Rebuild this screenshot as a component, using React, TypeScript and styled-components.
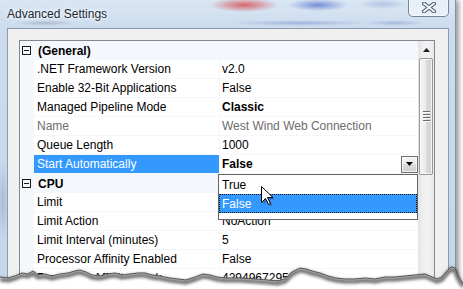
import styled, { createGlobalStyle } from "styled-components";

const GlobalStyle = createGlobalStyle`
  html, body {
    margin: 0;
    padding: 0;
    background: #fff;
    overflow: hidden;
  }
  body {
    font-family: "Liberation Sans", Arial, sans-serif;
  }
`;

type Prop = {
  name: string;
  value: string;
  bold?: boolean;
  disabled?: boolean;
  selected?: boolean;
  dropdown?: boolean;
};

type Category = { title: string; items: Prop[] };

const categories: Category[] = [
  {
    title: "(General)",
    items: [
      { name: ".NET Framework Version", value: "v2.0" },
      { name: "Enable 32-Bit Applications", value: "False" },
      { name: "Managed Pipeline Mode", value: "Classic", bold: true },
      { name: "Name", value: "West Wind Web Connection", disabled: true },
      { name: "Queue Length", value: "1000" },
      { name: "Start Automatically", value: "False", bold: true, selected: true, dropdown: true },
    ],
  },
  {
    title: "CPU",
    items: [
      { name: "Limit", value: "" },
      { name: "Limit Action", value: "NoAction" },
      { name: "Limit Interval (minutes)", value: "5" },
      { name: "Processor Affinity Enabled", value: "False" },
      { name: "Processor Affinity Mask", value: "4294967295" },
    ],
  },
];

const options = ["True", "False"];

// torn paper edge, y values relative to the svg top (page y 259)
const edge: [number, number][] = [
  [0, 277], [8, 278], [15, 276], [22, 273], [28, 274], [33, 271], [38, 275], [45, 274],
  [52, 276], [60, 274], [68, 273], [75, 271], [80, 270], [86, 272], [92, 275], [100, 276],
  [108, 274], [115, 273], [122, 275], [130, 274], [138, 273], [145, 273], [152, 275],
  [160, 276], [170, 278], [178, 279], [186, 280], [195, 277], [203, 274], [210, 275],
  [217, 277], [225, 278], [240, 278], [255, 279], [268, 280], [278, 281], [285, 279],
  [292, 272], [300, 268], [306, 269], [312, 271], [320, 273], [328, 276], [336, 278],
  [345, 279], [355, 279], [365, 278], [375, 279], [385, 277], [395, 277], [405, 276],
  [415, 275], [425, 274], [432, 277], [437, 279], [442, 277], [447, 271], [451, 267],
  [455, 268], [458, 276], [463, 284],
];

const edgeLine = edge.map(([x, y]) => `${x},${y - 259}`).join(" ");

export default function App() {
  return (
    <>
      <GlobalStyle />
      <Page>
        <Window>
          <TitleBar>
            <Title>Advanced Settings</Title>
            <CloseButton>
              <svg width="14" height="11" viewBox="0 0 14 11">
                <path d="M2 1.5 L12 9.5 M12 1.5 L2 9.5" stroke="#4c5a6a" strokeWidth="4" strokeLinecap="round" />
                <path d="M2 1.5 L12 9.5 M12 1.5 L2 9.5" stroke="#f4f7fa" strokeWidth="2" strokeLinecap="round" />
              </svg>
            </CloseButton>
          </TitleBar>
          <Client>
            <Grid>
              <Rows>
                {categories.map((cat) => (
                  <div key={cat.title}>
                    <CategoryRow>
                      <Toggle />
                      <CategoryLabel>{cat.title}</CategoryLabel>
                    </CategoryRow>
                    {cat.items.map((p) => (
                      <Row key={p.name}>
                        <Gutter />
                        <NameCell $selected={p.selected} $disabled={p.disabled}>
                          {p.name}
                        </NameCell>
                        <ValueCell $bold={p.bold} $disabled={p.disabled}>
                          <span>{p.value}</span>
                          {p.dropdown && (
                            <DropButton>
                              <svg width="7" height="4" viewBox="0 0 7 4">
                                <path d="M0 0 H7 L3.5 4 Z" fill="#000" />
                              </svg>
                            </DropButton>
                          )}
                        </ValueCell>
                      </Row>
                    ))}
                  </div>
                ))}
              </Rows>
              <ScrollBar>
                <ScrollArrow>
                  <svg width="7" height="4" viewBox="0 0 7 4">
                    <path d="M0 4 H7 L3.5 0 Z" fill="#1f1f1f" />
                  </svg>
                </ScrollArrow>
                <Thumb>
                  <Grip>
                    <i />
                    <i />
                    <i />
                    <i />
                  </Grip>
                </Thumb>
                <Track />
              </ScrollBar>
              <DropList>
                {options.map((o) => (
                  <Option key={o} $active={o === "False"}>
                    {o}
                  </Option>
                ))}
              </DropList>
              <Cursor width="13" height="20" viewBox="0 0 13 20">
                <path
                  d="M1.5 1.5 L1.5 17.5 L5.5 13.5 L8.5 19.5 L10.5 18.5 L7.5 12.5 L13 12.5 Z"
                  fill="rgba(0,0,0,0.25)"
                  transform="translate(1 1)"
                />
                <path
                  d="M0.5 0.5 L0.5 16.5 L4.5 12.5 L7.5 18.5 L9.5 17.5 L6.5 11.5 L12 11.5 Z"
                  fill="#fff"
                  stroke="#000"
                  strokeWidth="1"
                  strokeLinejoin="round"
                />
              </Cursor>
            </Grid>
          </Client>
        </Window>
        <TornEdge width="463" height="30" viewBox="0 0 463 30">
          <defs>
            <filter id="blur" x="-5%" y="-50%" width="110%" height="200%">
              <feGaussianBlur stdDeviation="1.6" />
            </filter>
          </defs>
          <polygon points={`${edgeLine} 463,30 0,30`} fill="#fff" />
          <polyline
            points={edgeLine}
            fill="none"
            stroke="#3a3a3a"
            strokeWidth="4"
            opacity="0.75"
            filter="url(#blur)"
            transform="translate(0 2.5)"
          />
          <polyline points={edgeLine} fill="none" stroke="#555" strokeWidth="1" />
        </TornEdge>
      </Page>
    </>
  );
}

const Page = styled.div`
  position: relative;
  width: 463px;
  height: 289px;
  overflow: hidden;
  background: #fff;
`;

const Window = styled.div`
  width: 456px;
  height: 320px;
  box-sizing: border-box;
  padding: 0 6px 0 7px;
  display: flex;
  flex-direction: column;
  border-right: 1px solid #8193a8;
  box-shadow: 3px 0 5px rgba(0, 0, 0, 0.4);
  background:
    radial-gradient(ellipse 34px 7px at 244px 5px, rgba(214, 58, 58, 0.75), transparent),
    radial-gradient(ellipse 30px 6px at 318px 5px, rgba(52, 84, 196, 0.6), transparent),
    radial-gradient(ellipse 24px 5px at 382px 4px, rgba(120, 150, 200, 0.4), transparent),
    radial-gradient(ellipse 70px 3px at 300px 23px, rgba(70, 100, 180, 0.35), transparent),
    radial-gradient(ellipse 30px 3px at 395px 23px, rgba(70, 100, 180, 0.3), transparent),
    radial-gradient(ellipse 30px 3px at 45px 23px, rgba(90, 100, 120, 0.3), transparent),
    radial-gradient(ellipse 6px 40px at 3px 200px, rgba(80, 100, 140, 0.25), transparent),
    linear-gradient(to bottom, #d9e6f4, #ccdcee 28px, #c4d6eb);
`;

const TitleBar = styled.div`
  height: 28px;
  display: flex;
  justify-content: space-between;
  align-items: flex-start;
`;

const Title = styled.div`
  margin-top: 6px;
  font-size: 12px;
  line-height: 16px;
  color: #1c2733;
  text-shadow: 0 0 6px #fff, 0 0 3px #fff;
`;

const CloseButton = styled.div`
  width: 41px;
  height: 18px;
  box-sizing: border-box;
  margin-top: -1px;
  border: 1px solid rgba(70, 88, 110, 0.7);
  border-top: none;
  border-radius: 0 0 5px 5px;
  background: linear-gradient(to bottom, rgba(255, 255, 255, 0.35), rgba(255, 255, 255, 0.55));
  box-shadow: inset 0 0 0 1px rgba(255, 255, 255, 0.5);
  display: flex;
  align-items: center;
  justify-content: center;
`;

const Client = styled.div`
  flex: 1;
  box-sizing: border-box;
  border: 1px solid #8a9bb0;
  background: #f0f0f0;
  padding: 11px 13px 0 11px;
  display: flex;
  flex-direction: column;
`;

const Grid = styled.div`
  position: relative;
  flex: 1;
  display: flex;
  border: 1px solid #828790;
  background: #fff;
  font-size: 12px;
  color: #000;
`;

const Rows = styled.div`
  width: 398px;
  display: flex;
  flex-direction: column;
`;

const CategoryRow = styled.div`
  height: 19px;
  display: flex;
  align-items: center;
  background: #f4f7fc;
`;

const Toggle = styled.div`
  position: relative;
  width: 9px;
  height: 9px;
  box-sizing: border-box;
  margin-left: 2px;
  border: 1px solid #1a1a1a;
  &::after {
    content: "";
    position: absolute;
    left: 1px;
    right: 1px;
    top: 3px;
    height: 1px;
    background: #1a1a1a;
  }
`;

const CategoryLabel = styled.span`
  margin-left: 7px;
  font-weight: bold;
`;

const Row = styled.div`
  height: 19px;
  box-sizing: border-box;
  display: flex;
  border-bottom: 1px solid #f4f7fc;
`;

const Gutter = styled.div`
  width: 14px;
  background: #f4f7fc;
`;

const NameCell = styled.div<{ $selected?: boolean; $disabled?: boolean }>`
  width: 186px;
  box-sizing: border-box;
  padding-left: 3px;
  display: flex;
  align-items: center;
  white-space: nowrap;
  border-right: 1px solid #f4f7fc;
  background: ${(p) => (p.$selected ? "#3399ff" : "transparent")};
  color: ${(p) => (p.$selected ? "#fff" : p.$disabled ? "#6d6d6d" : "#000")};
`;

const ValueCell = styled.div<{ $bold?: boolean; $disabled?: boolean }>`
  flex: 1;
  padding-left: 2px;
  display: flex;
  align-items: center;
  justify-content: space-between;
  white-space: nowrap;
  font-weight: ${(p) => (p.$bold ? "bold" : "normal")};
  color: ${(p) => (p.$disabled ? "#6d6d6d" : "#000")};
`;

const DropButton = styled.div`
  width: 17px;
  height: 17px;
  box-sizing: border-box;
  margin-right: 0;
  border: 1px solid #707070;
  background: linear-gradient(to bottom, #f2f2f2, #ebebeb 50%, #dddddd 50%, #cfcfcf);
  box-shadow: inset 0 0 0 1px rgba(255, 255, 255, 0.7);
  display: flex;
  align-items: center;
  justify-content: center;
`;

const ScrollBar = styled.div`
  width: 16px;
  display: flex;
  flex-direction: column;
  background: linear-gradient(to right, #e4e4e4, #f1f1f1 40%, #f1f1f1 70%, #e9e9e9);
`;

const ScrollArrow = styled.div`
  height: 17px;
  display: flex;
  align-items: center;
  justify-content: center;
`;

const Thumb = styled.div`
  height: 117px;
  margin: 0 1px 0 1px;
  box-sizing: border-box;
  border: 1px solid #979797;
  border-radius: 2px;
  background: linear-gradient(to right, #f3f3f3, #ececec 45%, #dadada 55%, #d2d2d2);
  box-shadow: inset 0 0 0 1px rgba(255, 255, 255, 0.7);
  display: flex;
  align-items: center;
  justify-content: center;
`;

const Grip = styled.div`
  display: flex;
  flex-direction: column;
  gap: 1px;
  & > i {
    display: block;
    width: 7px;
    height: 1px;
    background: #6b6b6b;
    border-bottom: 1px solid #fafafa;
  }
`;

const Track = styled.div`
  flex: 1;
`;

const DropList = styled.div`
  position: absolute;
  left: 198px;
  top: 133px;
  width: 200px;
  height: 46px;
  box-sizing: border-box;
  border: 1px solid #646464;
  background: #fff;
`;

const Option = styled.div<{ $active?: boolean }>`
  height: 19px;
  box-sizing: border-box;
  padding-left: 2px;
  display: flex;
  align-items: center;
  border: 1px dotted ${(p) => (p.$active ? "#101010" : "transparent")};
  background: ${(p) => (p.$active ? "#3399ff" : "#fff")};
  color: ${(p) => (p.$active ? "#fff" : "#000")};
`;

const Cursor = styled.svg`
  position: absolute;
  left: 241px;
  top: 145px;
`;

const TornEdge = styled.svg`
  position: absolute;
  left: 0;
  bottom: 0;
  display: block;
`;
